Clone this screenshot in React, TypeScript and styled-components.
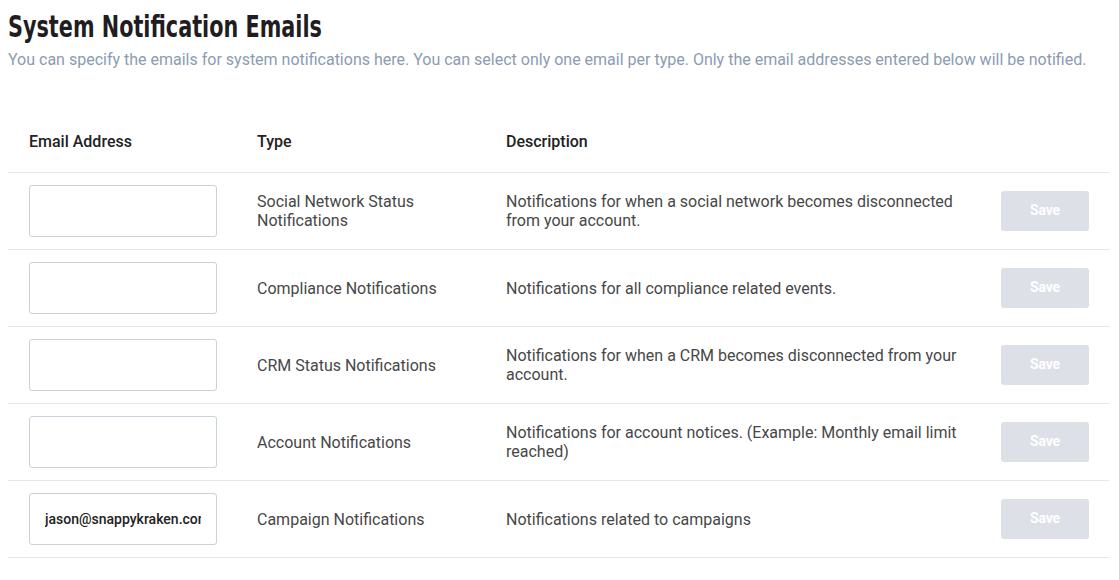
import React from "react";
import styled, { createGlobalStyle } from "styled-components";

const Global = createGlobalStyle`
  body { margin: 0; background: #fff; font-family: Roboto, "Noto Sans", sans-serif; }
`;

const Page = styled.div`
  padding: 6px 10px 0 8px;
`;

const Title = styled.h1`
  margin: 0;
  font-family: "DejaVu Sans", sans-serif;
  font-weight: 700;
  font-size: 31px;
  line-height: 40px;
  color: #1f1d1f;
  transform: scaleX(0.67);
  transform-origin: left center;
  white-space: nowrap;
`;

const Subtitle = styled.p`
  margin: 3px 0 0;
  font-size: 16px;
  line-height: 22px;
  color: #8b9bb3;
`;

const Table = styled.div`
  margin-top: 39px;
  display: grid;
  grid-template-columns: 228px 249px 496px 128px;
`;

const HeadCell = styled.div`
  padding: 0 20px 0 21px;
  height: 62px;
  display: flex;
  align-items: center;
  font-size: 16px;
  font-weight: 500;
  color: #222;
  border-bottom: 1px solid #e4e7ec;
`;

const Cell = styled.div`
  padding: 0 20px 0 21px;
  height: 76px;
  display: flex;
  align-items: center;
  font-size: 16px;
  font-weight: 400;
  line-height: 19px;
  color: #474747;
  border-bottom: 1px solid #e4e7ec;
`;

const ActionCell = styled(Cell)`
  padding: 0 20px;
  justify-content: flex-end;
`;

const EmailInput = styled.input`
  box-sizing: border-box;
  width: 188px;
  height: 52px;
  border: 1px solid #c9d1dc;
  border-radius: 3px;
  padding: 0 15px;
  font-family: Roboto, sans-serif;
  font-size: 14px;
  font-weight: 500;
  color: #222;
  outline: none;
`;

const SaveButton = styled.button`
  width: 88px;
  height: 40px;
  border: none;
  border-radius: 3px;
  padding: 0 0 2px;
  background: #dde0e6;
  color: #fff;
  font-family: Roboto, sans-serif;
  font-weight: 700;
  font-size: 14px;
  letter-spacing: -0.2px;
`;

const rows = [
  { email: "", type: "Social Network Status Notifications", desc: "Notifications for when a social network becomes disconnected from your account." },
  { email: "", type: "Compliance Notifications", desc: "Notifications for all compliance related events." },
  { email: "", type: "CRM Status Notifications", desc: "Notifications for when a CRM becomes disconnected from your account." },
  { email: "", type: "Account Notifications", desc: "Notifications for account notices. (Example: Monthly email limit reached)" },
  { email: "jason@snappykraken.com", type: "Campaign Notifications", desc: "Notifications related to campaigns" },
];

export default function App() {
  return (
    <>
      <Global />
      <Page>
        <Title>System Notification Emails</Title>
        <Subtitle>
          You can specify the emails for system notifications here. You can select only one email per type. Only the email addresses entered below will be notified.
        </Subtitle>
        <Table>
          <HeadCell>Email Address</HeadCell>
          <HeadCell>Type</HeadCell>
          <HeadCell>Description</HeadCell>
          <HeadCell />
          {rows.map((r) => (
            <React.Fragment key={r.type}>
              <Cell>
                <EmailInput defaultValue={r.email} />
              </Cell>
              <Cell>{r.type}</Cell>
              <Cell>{r.desc}</Cell>
              <ActionCell>
                <SaveButton disabled>Save</SaveButton>
              </ActionCell>
            </React.Fragment>
          ))}
        </Table>
      </Page>
    </>
  );
}
